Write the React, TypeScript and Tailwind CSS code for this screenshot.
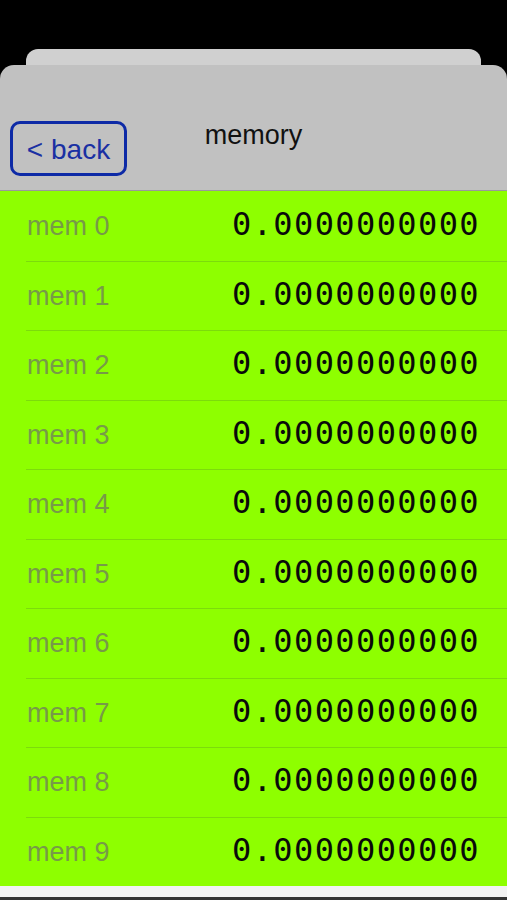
import React from 'react';

const mems = Array.from({ length: 10 }, (_, i) => ({ label: `mem ${i}`, value: '0.0000000000' }));

const App: React.FC = () => {
  return (
    <div className="w-[507px] h-[900px] bg-black flex flex-col overflow-hidden" style={{ fontFamily: '"Liberation Sans", Arial, sans-serif' }}>
      {/* stacked card behind */}
      <div className="h-[49px] shrink-0" />
      <div className="mx-[26px] h-[16px] shrink-0 bg-[#d0d0d0] rounded-t-[12px]" />

      {/* front card */}
      <div className="flex-1 flex flex-col bg-[#c1c1c1] rounded-t-[14px] overflow-hidden">
        <header className="h-[126px] shrink-0 grid grid-cols-[1fr_auto_1fr] border-b border-[#9a9a9a]">
          <div className="justify-self-start pl-[10px] pt-[56px]">
            <button className="w-[117px] h-[55px] border-[3px] border-[#0d2aa6] rounded-[10px] text-[28px] text-[#1a30a3] flex items-center justify-center leading-none pt-[3px]">
              &lt; back
            </button>
          </div>
          <h1 className="pt-[55px] text-[27px] leading-[30px] text-[#111]">memory</h1>
          <div />
        </header>

        <ul className="bg-[#8eff00] shrink-0">
          {mems.map((m, i) => (
            <li key={m.label} className="pl-[26px]">
              <div className={`h-[69.5px] flex items-center justify-between pr-[27px] ${i > 0 ? 'border-t border-[#7cdc0c]' : ''}`}>
                <span className="text-[27px] text-[#779a48] pl-[1px]">{m.label}</span>
                <span className="text-[32px] leading-none mb-[4px] text-[#0a0a0a] tracking-[1.4px]" style={{ fontFamily: '"DejaVu Sans Mono", Menlo, monospace' }}>{m.value}</span>
              </div>
            </li>
          ))}
        </ul>
        <div className="flex-1 bg-[#f2f2f2] border-b-[3px] border-[#333]" />
      </div>
    </div>
  );
};

export default App;
